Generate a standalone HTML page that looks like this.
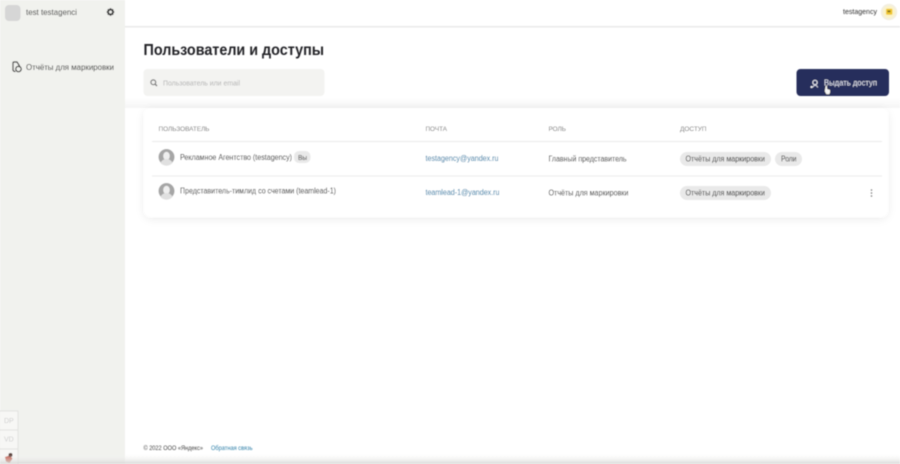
<!DOCTYPE html>
<html lang="ru">
<head>
<meta charset="utf-8">
<title>Пользователи и доступы</title>
<style>
html,body{margin:0;padding:0;width:900px;height:464px;overflow:hidden;background:#fff}
svg{display:block}
text{font-family:"Liberation Sans","Noto Sans CJK SC",sans-serif}
</style>
</head>
<body>
<svg width="900" height="464" viewBox="0 0 900 464" xmlns="http://www.w3.org/2000/svg">
<defs>
<filter id="b" x="-2%" y="-2%" width="104%" height="104%"><feGaussianBlur stdDeviation="0.45"/></filter>
<filter id="s" x="-5%" y="-20%" width="110%" height="140%"><feGaussianBlur stdDeviation="5"/></filter>
<linearGradient id="bot" x1="0" y1="0" x2="0" y2="1"><stop offset="0" stop-color="#fff" stop-opacity="0"/><stop offset="1" stop-color="#d6d6d4" stop-opacity=".9"/></linearGradient>
<linearGradient id="band" x1="0" y1="0" x2="0" y2="1"><stop offset="0" stop-color="#fff"/><stop offset="1" stop-color="#f5f5f5"/></linearGradient>
</defs>
<rect width="900" height="464" fill="#fff"/>
<g filter="url(#b)">
<!-- sidebar -->
<rect x="0" y="0" width="125" height="464" fill="#f1f2ee"/>
<rect x="5" y="5" width="15.500" height="16" rx="4" fill="#d6d6d6"/>
<text x="26" y="15" font-size="8.500" fill="#333" textLength="51" lengthAdjust="spacingAndGlyphs">test testagenci</text>
<g transform="translate(110.500 12)" fill="#333">
<circle r="2.300" fill="none" stroke="#333" stroke-width="1.600"/>
<path d="M-.9 -3.700h1.800v1.300h-1.800zM-.9 2.400h1.800v1.300h-1.800zM-3.700 -.9h1.300v1.800h-1.300zM2.400 -.9h1.300v1.800h-1.300z"/>
<path d="M-.9 -3.700h1.800v1.300h-1.800zM-.9 2.400h1.800v1.300h-1.800zM-3.700 -.9h1.300v1.800h-1.300zM2.400 -.9h1.300v1.800h-1.300z" transform="rotate(45)"/>
</g>
<g fill="none" stroke="#333" stroke-width="1.200">
<path d="M15.500 71.500l-1.500-.2-1-1v-7.300a1 1 0 0 1 1-1h3l2.300 3.500v1.800"/>
<circle cx="18.500" cy="69" r="2.700"/>
</g>
<text x="26" y="70" font-size="8" fill="#2e2e2e" textLength="88" lengthAdjust="spacingAndGlyphs">Отчёты для маркировки</text>

<!-- header -->
<rect x="125" y="26" width="775" height="1.500" fill="#e9e9e9"/>
<text x="843" y="14" font-size="7.500" fill="#333" textLength="34" lengthAdjust="spacingAndGlyphs">testagency</text>
<circle cx="889" cy="12" r="8.200" fill="#f3efe0"/>
<circle cx="889" cy="12" r="6.200" fill="#fbf3c8"/>
<rect x="886" y="8.800" width="6.400" height="6" rx="1" fill="#efc62e"/>
<rect x="887.500" y="10.500" width="3" height="1.700" fill="#7d6c24"/>

<!-- title -->
<text x="143.500" y="55" font-size="15.500" font-weight="700" fill="#222227" textLength="180.500" lengthAdjust="spacingAndGlyphs">Пользователи и доступы</text>

<!-- band under search -->
<rect x="125" y="98" width="775" height="10" fill="url(#band)"/>

<!-- search -->
<rect x="143.500" y="69" width="181" height="27" rx="4" fill="#f3f3f1"/>
<circle cx="153.300" cy="82.300" r="2.400" fill="none" stroke="#777" stroke-width="1.200"/>
<path d="M155 84l2 2" stroke="#777" stroke-width="1.300"/>
<text x="163" y="85.500" font-size="7" fill="#b3b3b3" textLength="77" lengthAdjust="spacingAndGlyphs">Пользователь или email</text>

<!-- button -->
<rect x="796.500" y="69" width="92.500" height="27" rx="4" fill="#262d5c"/>
<circle cx="815" cy="82.500" r="2.200" fill="none" stroke="#f0f0f6" stroke-width="1"/>
<path d="M812.600 87.500c.6-1.500 1.500-2.200 2.600-2.200s2 .7 2.500 2.200" fill="none" stroke="#d8d8e4" stroke-width=".9"/>
<circle cx="811.500" cy="87" r="1" fill="#fff"/>
<text x="824" y="85.500" font-size="8" fill="#e6e8f2" textLength="53" lengthAdjust="spacingAndGlyphs">Выдать доступ</text>
<path d="M825.500 85.500h1.800v3.300l3 1v2.700l-1 2h-3l-1.800-3.300z" fill="#f4f4f4" stroke="#333" stroke-width=".5"/>

<!-- card -->
<rect x="144" y="110" width="744" height="109" rx="8" fill="#000" opacity=".08" filter="url(#s)"/>
<rect x="144" y="108" width="744" height="109" rx="7" fill="#fff"/>
<g font-size="6.500" fill="#6e6e6e">
<text x="158.500" y="131" textLength="51" lengthAdjust="spacingAndGlyphs">ПОЛЬЗОВАТЕЛЬ</text>
<text x="425.500" y="131" textLength="21.500" lengthAdjust="spacingAndGlyphs">ПОЧТА</text>
<text x="548.500" y="131" textLength="17.500" lengthAdjust="spacingAndGlyphs">РОЛЬ</text>
<text x="680" y="131" textLength="26.500" lengthAdjust="spacingAndGlyphs">ДОСТУП</text>
</g>
<rect x="152" y="141" width="730" height="1" fill="#e9e9e9"/>
<rect x="152" y="175.500" width="730" height="1" fill="#e9e9e9"/>

<!-- row 1 -->
<circle cx="166.500" cy="157" r="8" fill="#a6a6a6"/>
<ellipse cx="166.500" cy="156" rx="3.300" ry="4.300" fill="#efefef"/>
<path d="M160.500 163a6.500 6.500 0 0 1 12 0a8 8 0 0 1-12 0z" fill="#e0e0e0"/>
<text x="180" y="160" font-size="8" fill="#262626" textLength="112" lengthAdjust="spacingAndGlyphs">Рекламное Агентство (testagency)</text>
<rect x="294" y="151" width="16.500" height="12" rx="5" fill="#e9e9e9"/>
<text x="298" y="160" font-size="7.500" fill="#222" textLength="9" lengthAdjust="spacingAndGlyphs">Вы</text>
<text x="425.500" y="161" font-size="8" fill="#1f76a3" textLength="73" lengthAdjust="spacingAndGlyphs">testagency@yandex.ru</text>
<text x="548.500" y="161.500" font-size="8" fill="#222" textLength="78" lengthAdjust="spacingAndGlyphs">Главный представитель</text>
<rect x="680" y="152" width="91" height="14" rx="7" fill="#e9e9e9"/>
<text x="685.500" y="161.500" font-size="8" fill="#2a2a2a" textLength="79.500" lengthAdjust="spacingAndGlyphs">Отчёты для маркировки</text>
<rect x="775" y="152" width="27" height="14" rx="7" fill="#e9e9e9"/>
<text x="781" y="161.500" font-size="8" fill="#2a2a2a" textLength="15.500" lengthAdjust="spacingAndGlyphs">Роли</text>

<!-- row 2 -->
<circle cx="166.500" cy="191" r="8" fill="#a6a6a6"/>
<ellipse cx="166.500" cy="190" rx="3.300" ry="4.300" fill="#efefef"/>
<path d="M160.500 197a6.500 6.500 0 0 1 12 0a8 8 0 0 1-12 0z" fill="#e0e0e0"/>
<text x="180" y="193.500" font-size="8" fill="#262626" textLength="156" lengthAdjust="spacingAndGlyphs">Представитель-тимлид со счетами (teamlead-1)</text>
<text x="425.500" y="195" font-size="8" fill="#1f76a3" textLength="74" lengthAdjust="spacingAndGlyphs">teamlead-1@yandex.ru</text>
<text x="548.500" y="195.500" font-size="8" fill="#222" textLength="80" lengthAdjust="spacingAndGlyphs">Отчёты для маркировки</text>
<rect x="680" y="186" width="91" height="14" rx="7" fill="#e9e9e9"/>
<text x="685.500" y="195.500" font-size="8" fill="#2a2a2a" textLength="79.500" lengthAdjust="spacingAndGlyphs">Отчёты для маркировки</text>
<g fill="#555"><circle cx="871.500" cy="190" r=".8"/><circle cx="871.500" cy="193" r=".8"/><circle cx="871.500" cy="196" r=".8"/></g>

<!-- footer -->
<text x="143.500" y="450" font-size="6.500" fill="#444" textLength="59.500" lengthAdjust="spacingAndGlyphs">© 2022 ООО «Яндекс»</text>
<text x="211" y="450" font-size="6.500" fill="#2f7fa8" textLength="41.500" lengthAdjust="spacingAndGlyphs">Обратная связь</text>

<!-- bottom-left boxes -->
<rect x="-1" y="411" width="19" height="19" fill="#f7f7f5" stroke="#e2e2e0"/>
<rect x="-1" y="430" width="19" height="19" fill="#f7f7f5" stroke="#e2e2e0"/>
<rect x="-1" y="449" width="19" height="17" fill="#f7f7f5" stroke="#e2e2e0"/>
<text x="4" y="423" font-size="7" fill="#cfcfcf">DP</text>
<text x="4" y="441.500" font-size="7" fill="#cfcfcf">VD</text>
<path d="M5 457l4.500-1.500 3 3-3 4.500-3.500-1.500z" fill="#b8402e"/>
<circle cx="10.500" cy="455" r="2" fill="#4a2a24"/>

<!-- bottom fade -->
<rect x="0" y="453" width="900" height="11" fill="url(#bot)"/>
</g>
</svg>
</body>
</html>
